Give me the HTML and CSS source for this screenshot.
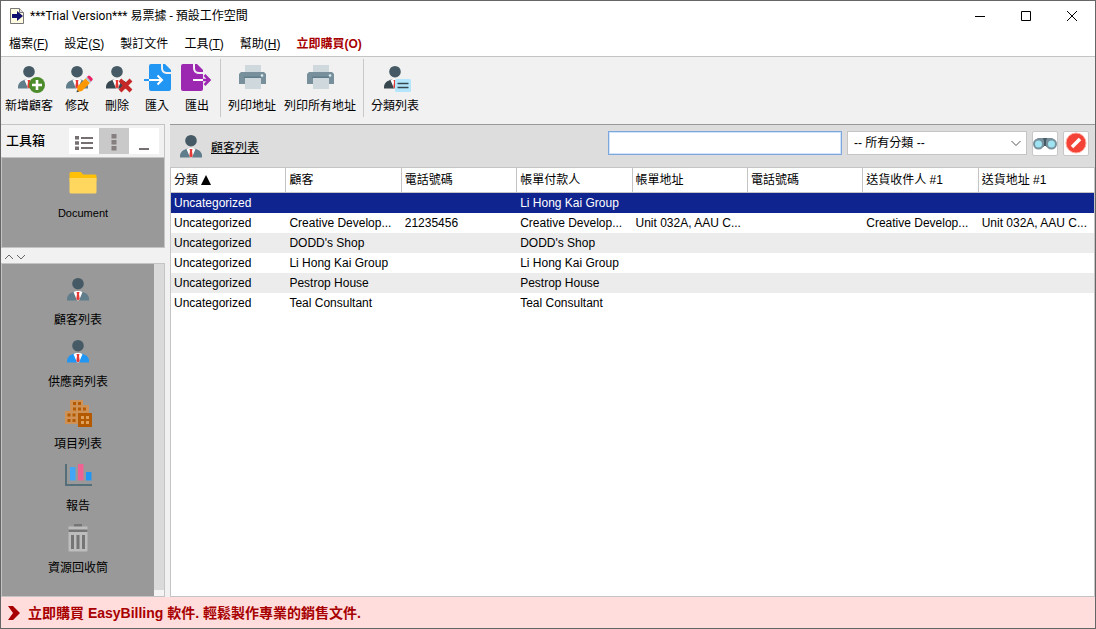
FILE: index.html
```html
<!DOCTYPE html>
<html lang="zh-Hant">
<head>
<meta charset="utf-8">
<title>***Trial Version*** 易票據 - 預設工作空間</title>
<link rel="stylesheet" href="styles.css">
</head>
<body>
<svg class="defs" aria-hidden="true">
  <symbol id="person" viewBox="0 0 28 28">
    <path class="suit" d="M3 24.500V22.500C3.500 18.500 6 17 10.500 15.500h7C22 17 24.500 18.500 25 22.500v2z"/>
    <path fill="#fff" d="M9.500 16L12 15h4l2.500 1-3.500 8.500h-2z"/>
    <path fill="#e53935" d="M12.500 16h3l-.5 2 .7 5-1.700 1.500-1.700-1.500.7-5z"/>
    <circle cx="14" cy="7.700" r="5.800" fill="#455a64"/>
  </symbol>
  <symbol id="printer" viewBox="0 0 28 28">
    <path fill="#cfd8dc" d="M7 1h16v7H7z"/>
    <path fill="#78909c" d="M3 8h23l2 2v10H1V10z"/>
    <circle cx="24" cy="11.500" r="1.300" fill="#dcedf5"/>
    <path fill="#607d8b" d="M6 12.500h17v1.500H6z"/>
    <path fill="#cfd8dc" d="M7 14h16v11H7z"/>
  </symbol>
</svg>
<div class="app">
  <header class="titlebar">
    <svg class="logo" viewBox="0 0 14 16"><path fill="#fffbe0" stroke="#777" d="M.5.500h9l4 4v11H.5z"/><path fill="#ddd" stroke="#777" d="M9.500.500v4h4"/><path fill="#10106e" d="M2 6h5V3l6 5-6 5v-3H2z"/></svg>
    <h1 class="title">***Trial Version*** 易票據 - 預設工作空間</h1>
    <div class="window-controls">
      <button aria-label="最小化"><svg viewBox="0 0 12 12"><path d="M1 6.500h10"/></svg></button>
      <button aria-label="最大化"><svg viewBox="0 0 12 12"><path d="M1.500 1.500h9v9h-9z"/></svg></button>
      <button aria-label="關閉"><svg viewBox="0 0 12 12"><path d="M1 1l10 10M11 1L1 11"/></svg></button>
    </div>
  </header>
  <nav class="menubar">
    <button>檔案(<u>F</u>)</button>
    <button>設定(<u>S</u>)</button>
    <button>製訂文件</button>
    <button>工具(<u>T</u>)</button>
    <button>幫助(<u>H</u>)</button>
    <button class="buy">立即購買(O)</button>
  </nav>
  <div class="toolbar">
    <button class="tool wide">
      <svg class="icon" viewBox="0 0 28 28"><use href="#person" width="28" height="28"/><circle cx="22" cy="21" r="8" fill="#4c8c2b"/><path d="M22 16v10M17 21h10" stroke="#fff" stroke-width="2.600"/></svg>
      <span>新增顧客</span></button>
    <button class="tool">
      <svg class="icon" viewBox="0 0 28 28"><use href="#person" width="28" height="28"/><path fill="#ff9800" d="M14.500 22.500l8-8 4.500 4.500-8 8-5 1z"/><path fill="#b0bec5" d="M22.500 14.500l1.500-1.500 4.500 4.500-1.500 1.500z"/><path fill="#e91e63" d="M24 13l1-1q1-1 2 0l2.300 2.300q1 1 0 2L28 17.500z"/><path fill="#37474f" d="M14 26l2 1.800-2.500.500z"/></svg>
      <span>修改</span></button>
    <button class="tool dark">
      <svg class="icon" viewBox="0 0 28 28"><use href="#person" width="28" height="28"/><path d="M17 16l11 11M28 16l-11 11" stroke="#c62828" stroke-width="4"/></svg>
      <span>刪除</span></button>
    <button class="tool">
      <svg class="icon" viewBox="0 0 28 28"><path fill="#2196f3" d="M8 0h10v4q0 5 5 6h5v15q0 2-2 2H8q-2 0-2-2V2q0-2 2-2z"/><path fill="#2196f3" d="M20 0h2l6 6v2h-4q-4 0-4-4z"/><path d="M1 16h6" stroke="#2196f3" stroke-width="2"/><path d="M6 16h12M14.500 11.500L19 16l-4.500 4.500" fill="none" stroke="#fff" stroke-width="2"/></svg>
      <span>匯入</span></button>
    <button class="tool">
      <svg class="icon" viewBox="0 0 28 28"><path fill="#9c27b0" d="M0 0h10v4q0 5 5 6h5v15q0 2-2 2H0q-2 0-2-2V2q0-2 2-2z"/><path fill="#9c27b0" d="M12 0h2l6 6v2h-4q-4 0-4-4z"/><path d="M10 16h10" stroke="#fff" stroke-width="2"/><path d="M20 16h6M21.500 11l5 5-5 5" fill="none" stroke="#9c27b0" stroke-width="2.500"/></svg>
      <span>匯出</span></button>
    <span class="separator"></span>
    <button class="tool wide"><svg class="icon"><use href="#printer"/></svg><span>列印地址</span></button>
    <button class="tool widest"><svg class="icon"><use href="#printer"/></svg><span>列印所有地址</span></button>
    <span class="separator"></span>
    <button class="tool wide dark">
      <svg class="icon" viewBox="0 0 28 28"><use href="#person" width="28" height="28"/><rect x="14" y="15" width="16" height="13" rx="1.500" fill="#b3e5fc"/><path d="M16.500 19.500h11M16.500 23.500h11" stroke="#37474f" stroke-width="1.500"/></svg>
      <span>分類列表</span></button>
  </div>
  <div class="workspace">
    <aside class="sidebar">
      <div class="box-head">
        <h2>工具箱</h2>
        <button aria-label="清單"><svg viewBox="0 0 30 26"><path fill="none" stroke="#756f6f" stroke-width="2" d="M12 10h12M12 15h12M12 20h12"/><path fill="#756f6f" d="M6 8h4v3.500H6zM6 13.200h4v3.500H6zM6 18.500h4V22H6z"/></svg></button>
        <button class="active" aria-label="圖示"><svg viewBox="0 0 30 26"><path fill="#857f7f" d="M12.500 6h5v4.500h-5zM12.500 12h5v4.500h-5zM12.500 18h5v4.500h-5z"/></svg></button>
        <button aria-label="收起"><svg viewBox="0 0 30 26"><path fill="#756f6f" d="M10 20h10v2H10z"/></svg></button>
      </div>
      <div class="documents">
        <button class="item document"><svg class="icon" viewBox="0 0 28 28"><path fill="#ffc107" d="M2 3q-1.500 0-1.500 1.500V12h27V7q0-1.500-1.500-1.500H14L12 3z"/><path fill="#ffd75e" d="M.5 9h27v14q0 1.500-1.500 1.500H2Q.5 24.500.5 23z"/></svg><span>Document</span></button>
      </div>
      <div class="splitter">
        <button aria-label="向上"><svg viewBox="0 0 10 8"><path d="M1 6l4-4 4 4"/></svg></button>
        <button aria-label="向下"><svg viewBox="0 0 10 8"><path d="M1 2l4 4 4-4"/></svg></button>
      </div>
      <div class="lists">
        <div class="list-items">
          <button class="item"><svg class="icon"><use href="#person"/></svg><span>顧客列表</span></button>
          <button class="item blue"><svg class="icon"><use href="#person"/></svg><span>供應商列表</span></button>
          <button class="item"><svg class="icon" viewBox="0 0 28 28"><path fill="#cf9154" d="M6 0h13v5h6v19H1V11h5z"/><path fill="#b35a00" d="M9 2h3v3H9zM14 2h3v3h-3zM9 7.500h3v3H9zM14 7.500h3v3h-3zM19 7.500h3v3h-3zM3.500 13.500h3v3h-3zM8.500 13.500h3v3h-3zM3.500 19h3v3h-3zM8.500 19h3v3h-3zM14 13h14v14H14z"/><path fill="#dfa05a" d="M17 16h3v3h-3zM22 16h3v3h-3zM17 21h3v3h-3zM22 21h3v3h-3z"/></svg><span>項目列表</span></button>
          <button class="item"><svg class="icon" viewBox="0 0 28 28"><path fill="#546e7a" d="M1 2h2v20h25v2H1z"/><path fill="#42a5f5" d="M6 5h5.500v13.500H6z"/><path fill="#f06292" d="M14 2h5.500v16.500H14z"/><path fill="#2196f3" d="M22 10h5.500v8.500H22z"/></svg><span>報告</span></button>
          <button class="item"><svg class="icon" viewBox="0 0 28 28"><path fill="#757575" d="M10 0h8v3h-8z"/><path fill="#bdbdbd" d="M4.500 2.500h19v24q0 1-1 1h-17q-1 0-1-1z"/><path fill="#757575" d="M4.500 5.500h19V8h-19zM7 11h3v14H7zM12.500 11h3v14h-3zM18 11h3v14h-3z"/></svg><span>資源回收筒</span></button>
        </div>
        <div class="scrolltrack"><span></span></div>
      </div>
    </aside>
    <main class="content">
      <div class="content-head">
        <svg class="icon"><use href="#person"/></svg>
        <a class="heading" href="#customers">顧客列表</a>
        <input class="search" type="text" aria-label="搜尋">
        <div class="select-wrap">
          <select aria-label="分類"><option>-- 所有分類 --</option></select>
          <svg viewBox="0 0 10 8"><path d="M.5 2l4.500 4.500L9.500 2"/></svg>
        </div>
        <button class="square" aria-label="尋找"><svg viewBox="0 0 24 22"><path fill="#455a64" d="M9 6h6v8H9z"/><path fill="#78909c" d="M2 8l3-2h5l1 3v6H2zM22 8l-3-2h-5l-1 3v6h9z"/><circle cx="5.500" cy="12" r="4.500" fill="#9ee3f2" stroke="#78909c" stroke-width="2"/><circle cx="18.500" cy="12" r="4.500" fill="#9ee3f2" stroke="#78909c" stroke-width="2"/></svg></button>
        <button class="square" aria-label="清除"><svg viewBox="0 0 24 22"><circle cx="12" cy="11" r="10" fill="#f44336" stroke="#ffab9f"/><path d="M8 15l8-8" stroke="#fff" stroke-width="3.500"/></svg></button>
      </div>
      <div class="table-area">
        <table>
          <thead><tr><th>分類 <svg class="sort" viewBox="0 0 10 10"><path d="M5 0l5 10H0z"/></svg></th><th>顧客</th><th>電話號碼</th><th>帳單付款人</th><th>帳單地址</th><th>電話號碼</th><th>送貨收件人 #1</th><th>送貨地址 #1</th></tr></thead>
          <tbody>
            <tr class="selected"><td>Uncategorized</td><td></td><td></td><td>Li Hong Kai Group</td><td></td><td></td><td></td><td></td></tr>
            <tr><td>Uncategorized</td><td>Creative Develop...</td><td>21235456</td><td>Creative Develop...</td><td>Unit 032A, AAU C...</td><td></td><td>Creative Develop...</td><td>Unit 032A, AAU C...</td></tr>
            <tr><td>Uncategorized</td><td>DODD's Shop</td><td></td><td>DODD's Shop</td><td></td><td></td><td></td><td></td></tr>
            <tr><td>Uncategorized</td><td>Li Hong Kai Group</td><td></td><td>Li Hong Kai Group</td><td></td><td></td><td></td><td></td></tr>
            <tr><td>Uncategorized</td><td>Pestrop House</td><td></td><td>Pestrop House</td><td></td><td></td><td></td><td></td></tr>
            <tr><td>Uncategorized</td><td>Teal Consultant</td><td></td><td>Teal Consultant</td><td></td><td></td><td></td><td></td></tr>
          </tbody>
        </table>
      </div>
    </main>
  </div>
  <footer class="promo">
    <svg viewBox="0 0 12 14"><path fill="#a80000" d="M0 0h5l7 7-7 7H0l5-7z"/></svg>
    <a href="#buy">立即購買 EasyBilling 軟件. 輕鬆製作專業的銷售文件.</a>
  </footer>
</div>
</body>
</html>
```
FILE: styles.css
```css
* { box-sizing: border-box; }
body {
  margin: 0;
  font: 12px/18px "Liberation Sans", "Noto Sans CJK TC", sans-serif;
  color: #000;
}
button {
  margin: 0;
  padding: 0;
  border: 0;
  background: none;
  font: inherit;
  color: inherit;
}
.defs { position: absolute; width: 0; height: 0; }
.icon { display: block; width: 28px; height: 28px; overflow: visible; color: #607d8b; }
.suit { fill: currentColor; }
.dark .icon { color: #37474f; }
.blue .icon { color: #2196f3; }

.app {
  display: flex;
  flex-direction: column;
  min-height: 100vh;
  border: 1px solid #666;
  background: #f1f1f1;
}

.titlebar { display: flex; align-items: center; height: 29px; padding-left: 9px; background: #fff; }
.logo { width: 14px; height: 16px; }
.title {
  flex: 1;
  margin: 0 0 0 6px;
  font: 12px/18px Roboto, "Noto Sans CJK TC", sans-serif;
}
.window-controls { display: flex; }
.window-controls button { display: grid; place-items: center; width: 46px; height: 28px; }
.window-controls svg { width: 12px; height: 12px; fill: none; stroke: #000; }

.menubar {
  display: flex;
  gap: 16px;
  height: 27px;
  padding: 1px 8px 0;
  border-bottom: 1px solid #c4c4c4;
  background: #fff;
}
.menubar .buy { font-weight: bold; color: #a80000; }

.toolbar { display: flex; height: 67px; }
.tool {
  display: flex;
  flex-direction: column;
  align-items: center;
  gap: 5px;
  width: 40px;
  padding-top: 7px;
  white-space: nowrap;
}
.tool.wide { width: 56px; }
.tool.widest { width: 80px; }
.separator { width: 1px; height: 58px; margin: 2px 3px 0; background: #c8c8c8; }

.workspace { display: flex; flex: 1; gap: 5px; }
.sidebar { display: flex; flex-direction: column; width: 164px; }
.box-head {
  display: flex;
  align-items: center;
  height: 33px;
  padding: 0 5px;
  border: 1px solid #c4c4c4;
  border-width: 1px 1px 0 0;
}
.box-head h2 { flex: 1; margin: 0; font-size: 13px; line-height: 20px; font-weight: 500; }
.box-head button { width: 30px; height: 26px; background: #fff; }
.box-head .active { background: #c9c9c9; }
.box-head svg { display: block; width: 30px; height: 26px; }
.documents { height: 91px; padding-top: 6px; border: 1px solid #c4c4c4; background: #999; }
.item {
  display: flex;
  flex-direction: column;
  align-items: center;
  gap: 7px;
  width: 100%;
  height: 62px;
  padding-top: 5px;
}
.item.document { font-size: 11px; }
.splitter { display: flex; gap: 2px; height: 15px; padding: 3px 3px 0; }
.splitter svg { display: block; width: 10px; height: 8px; fill: none; stroke: #666; }
.lists { display: flex; flex: 1; border: 1px solid #c4c4c4; background: #999; }
.list-items { flex: 1; padding-top: 7px; }
.scrolltrack { display: flex; align-items: flex-end; width: 10px; background: #dadada; }
.scrolltrack span { width: 10px; height: 6px; background: #f4f4f4; }

.content { display: flex; flex: 1; flex-direction: column; min-width: 0; border-top: 1px solid #999; }
.content-head { display: flex; align-items: center; gap: 5px; height: 42px; padding: 0 6px 6px 7px; background: #ddd; }
.content-head .icon { margin-top: 8px; }
.heading { margin: 10px auto 0 1px; color: #000; text-decoration: underline; }
.search { width: 234px; height: 24px; border: 1px solid #7da7dc; box-shadow: inset 0 0 0 1px #d0e4fa; background: #fff; outline: 0; }
.select-wrap { display: grid; align-items: center; width: 180px; height: 24px; }
.select-wrap select,
.select-wrap svg { grid-area: 1 / 1; }
.select-wrap select {
  appearance: none;
  width: 100%;
  height: 24px;
  padding: 0 6px;
  border: 1px solid #c4c4c4;
  border-radius: 0;
  background: #fff;
  font: inherit;
  color: #000;
}
.select-wrap svg { justify-self: end; width: 10px; height: 8px; margin-right: 6px; fill: none; stroke: #555; pointer-events: none; }
.square { display: grid; place-items: center; width: 26px; height: 25px; border: 1px solid #c8c8c8; border-radius: 2px; background: #fff; }
.square svg { width: 24px; height: 22px; }

.table-area { flex: 1; border: 1px solid #c4c4c4; background: #fff; }
table { width: 100%; border-collapse: separate; border-spacing: 0; table-layout: fixed; }
th {
  height: 25px;
  padding: 0 3px;
  border: 1px solid #c4c4c4;
  border-width: 0 1px 1px 0;
  font-weight: normal;
  text-align: left;
  white-space: nowrap;
}
th:last-child { border-right: 0; }
.sort { width: 10px; height: 10px; vertical-align: -1px; }
td { height: 20px; padding: 0 3px; overflow: hidden; line-height: 20px; white-space: nowrap; }
tbody tr:nth-child(odd) { background: #ececec; }
tbody .selected:nth-child(odd) { background: #10248f; color: #fff; }

.promo { display: flex; align-items: center; gap: 8px; height: 31px; padding-left: 7px; background: #ffdddd; }
.promo svg { width: 12px; height: 14px; }
.promo a { font-size: 14px; line-height: 20px; font-weight: bold; color: #a80000; text-decoration: none; }
```
